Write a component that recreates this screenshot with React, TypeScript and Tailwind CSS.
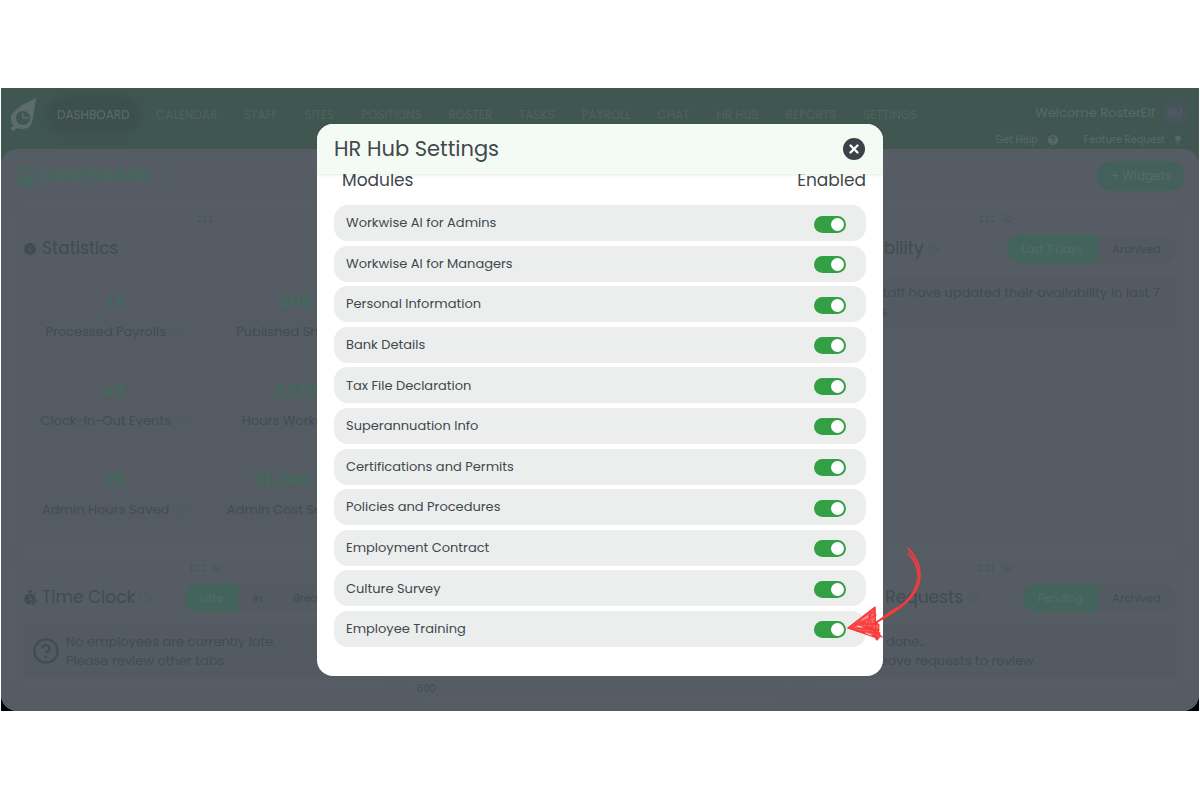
import React, { useState } from 'react';
import { CircleHelp, EyeOff, GripHorizontal, Info, Lightbulb, X } from 'lucide-react';

const NAV = ['DASHBOARD', 'CALENDAR', 'STAFF', 'SITES', 'POSITIONS', 'ROSTER', 'TASKS', 'PAYROLL', 'CHAT', 'HR HUB', 'REPORTS', 'SETTINGS'];

const MODULES = [
  'Workwise AI for Admins',
  'Workwise AI for Managers',
  'Personal Information',
  'Bank Details',
  'Tax File Declaration',
  'Superannuation Info',
  'Certifications and Permits',
  'Policies and Procedures',
  'Employment Contract',
  'Culture Survey',
  'Employee Training',
];

const STATS = [
  { value: '12', label: 'Processed Payrolls' },
  { value: '308', label: 'Published Shifts' },
  { value: '42', label: 'Clock-In-Out Events' },
  { value: '2,278', label: 'Hours Worked' },
  { value: '26', label: 'Admin Hours Saved' },
  { value: '$1,040.00', label: 'Admin Cost Saved' },
];

const Logo = () => (
  <svg viewBox="0 0 28 36" className="h-9 w-7 shrink-0" fill="#5b6c6b" aria-hidden="true">
    <path fillRule="evenodd" d="M27 2 L13 9 L8 13 L2 19 C1 23 2 27 5 30 L1 32 L4 35 L9 32 C13 34 19 33 22 29 L24 22 Z M14 15 C18 15 21 18 21 22 C21 26 18 29 14 29 C10 29 7 26 7 22 C7 18 10 15 14 15 Z" />
    <path d="M13 17 h1.5 v4 h5 v1.5 h-6.5 Z" />
  </svg>
);

const GaugeIcon = () => (
  <svg viewBox="0 0 22 22" className="size-[22px] shrink-0" fill="none" stroke="#44685c" aria-hidden="true">
    <circle cx="11" cy="11" r="9.5" strokeWidth="1.8" />
    <path d="M4 15 C8 13.5 14 13.5 18 15 C15 20.5 7 20.5 4 15 Z" fill="#44685c" />
    <path d="M11 13 L14 7 M5 11 h1.5 M7 7 l1 1 M11 5 v1.5 M17 11 h-1.5" strokeWidth="1.4" />
  </svg>
);

const StopwatchIcon = () => (
  <svg viewBox="0 0 14 16" className="h-4 w-3.5 shrink-0" aria-hidden="true">
    <path d="M4 1 h4 M6 1 v2 M10 3 l1.5 1.5" stroke="#414b50" strokeWidth="1.6" />
    <circle cx="6" cy="9" r="5.5" fill="#414b50" />
    <path d="M6 6 v3.5 h2" stroke="#555c64" strokeWidth="1.3" fill="none" />
    <path d="M7 12 l2.5 2.5 L13.5 10" stroke="#555c64" strokeWidth="3" fill="none" />
    <path d="M7.5 12 l2 2 L13 10.5" stroke="#414b50" strokeWidth="1.4" fill="none" />
  </svg>
);

const Handle = ({ hide = true }: { hide?: boolean }) => (
  <div className="flex h-6 items-center justify-center gap-1 text-[#4a5359]">
    <GripHorizontal className="size-5" strokeWidth={1} />
    {hide && <EyeOff className="size-3" strokeWidth={1.5} />}
  </div>
);

interface WidgetProps {
  title: string;
  icon: React.ReactNode;
  tabs?: string[];
  hide?: boolean;
  help?: boolean;
  className?: string;
  tabsClassName?: string;
  children: React.ReactNode;
}

const Widget = ({ title, icon, tabs = [], hide, help = true, className = '', tabsClassName = '', children }: WidgetProps) => (
  <section className={`rounded-lg border border-[#575e66] px-2 pb-2 ${className}`}>
    <Handle hide={hide} />
    <div className="mt-1 mb-3 flex h-7 items-center justify-between">
      <h2 className="flex items-center gap-1 text-[17px] whitespace-nowrap text-[#414b50]">
        {icon}
        {title}
        {help && <CircleHelp className="size-3 text-[#4c555b]" strokeWidth={1.2} />}
      </h2>
      {tabs.length > 0 && (
        <div className={`flex h-7 overflow-hidden rounded-full bg-[#535a62] text-[11px] ${tabsClassName}`}>
          {tabs.map((tab, i) => (
            <button key={tab} type="button" className={i === 0 ? 'bg-[#43645b] px-[15px] text-[#566b69]' : 'px-[15px] text-[#434c52]'}>
              {tab}
            </button>
          ))}
        </div>
      )}
    </div>
    {children}
  </section>
);

const Notice = ({ lines }: { lines: string[] }) => (
  <div className="flex items-center gap-1.5 rounded bg-[#535a62] px-2 py-2 text-[13px] leading-[19px] whitespace-nowrap text-[#434c52]">
    <CircleHelp className="size-7 shrink-0" strokeWidth={2} />
    <p>
      {lines.map((line) => (
        <span key={line} className="block">{line}</span>
      ))}
    </p>
  </div>
);

const Dashboard = () => (
  <div className="overflow-hidden rounded-b-2xl bg-[#405650]">
    <header className="flex h-[61px] items-start pr-3 pl-2">
      <div className="pt-2">
        <Logo />
      </div>
      <nav className="mr-[120px] ml-5 flex flex-1 items-center justify-between pt-[18px] text-[12px] leading-[18px] whitespace-nowrap text-[#50625f]">
        {NAV.map((item, i) => (
          <a key={item} href="#" className={i === 0 ? 'rounded-full bg-[#3d504c] text-[#5b6c6b] shadow-[0_0_10px_10px_#3d504c]' : ''}>
            {item}
          </a>
        ))}
      </nav>
      <div className="-ml-[42px] text-[#586a67]">
        <div className="flex h-[42px] items-center justify-end gap-2 pt-2 text-[13px]">
          Welcome RosterElf
          <span className="flex size-6 items-center justify-center rounded-full bg-[#46545c] text-[10px] text-[#555e68]">RM</span>
        </div>
        <div className="flex items-center justify-end gap-6 pr-1 text-[10px] leading-[20px]">
          <a href="#" className="flex items-center gap-2">Get Help <CircleHelp className="size-3.5" fill="currentColor" stroke="#405650" strokeWidth={2.5} /></a>
          <a href="#" className="flex items-center gap-2">Feature Request <Lightbulb className="size-2.5" fill="currentColor" /></a>
        </div>
      </div>
    </header>

    <main className="rounded-t-2xl bg-[#555c64] px-3.5 pt-3 pb-3">
      <div className="mb-[15px] flex h-[30px] items-center justify-between">
        <h1 className="flex items-center gap-1 text-[17px] font-bold text-[#44685c]">
          <GaugeIcon />
          DASHBOARD
          <CircleHelp className="ml-2 size-3 text-[#4f5960]" strokeWidth={1.2} />
        </h1>
        <button type="button" className="h-[30px] w-[88px] rounded-full bg-[#43615a] text-[12px] text-[#566b69]">+ Widgets</button>
      </div>
      <div className="grid grid-cols-3 gap-x-3.5">
        <div className="flex flex-col gap-1 pb-3">
          <Widget title="Statistics" hide={false} help={false} icon={<Info className="-ml-0.5 size-4" fill="#414b50" stroke="#555c64" strokeWidth={2} />}>
            <div className="grid h-[267px] grid-cols-2 rounded bg-[#545b63]">
              {STATS.map((s) => (
                <div key={s.label} className="flex flex-col items-center gap-2 pt-3.5">
                  <strong className="text-[17px] leading-[26px] text-[#44685c]">{s.value}</strong>
                  <span className="flex items-center gap-1.5 text-[13px] leading-[18px] whitespace-nowrap text-[#434c52]">
                    {s.label}
                    <CircleHelp className="size-3 text-[#4e5960]" strokeWidth={1.2} />
                  </span>
                </div>
              ))}
            </div>
          </Widget>
          <Widget title="Time Clock" tabs={['Late', 'In', 'Break']} tabsClassName="pr-12" icon={<StopwatchIcon />}>
            <Notice lines={['No employees are currently late.', 'Please review other tabs.']} />
          </Widget>
        </div>
        <div className="flex items-end rounded-lg border border-[#575e66] px-1.5 py-0.5 text-[10px] text-[#434c52]">600</div>
        <div className="flex flex-col gap-1 pb-3">
          <Widget title="Availability" className="flex-1" tabs={['Last 7 Days', 'Archived']} icon={<Info className="size-3.5" />}>
            <Notice lines={['No staff have updated their availability in last 7', 'days.']} />
          </Widget>
          <Widget title="Leave Requests" tabs={['Pending', 'Archived']} icon={<Info className="size-3.5" />}>
            <Notice lines={['Well done..', 'No leave requests to review.']} />
          </Widget>
        </div>
      </div>
    </main>
  </div>
);

const Arrow = () => (
  <svg viewBox="0 0 76 98" className="pointer-events-none absolute -right-[39px] bottom-8 h-[98px] w-[76px]" fill="none" stroke="#f93a3a" strokeLinecap="round" strokeLinejoin="round" aria-hidden="true">
    <path d="M62 2 C70 10 74 19 74 29 C74 45 62 56 49 65 C42 70 36 73 29 77" strokeWidth="1.7" />
    <path d="M62 8 C69 14 72 21 72 31 C71 44 62 56 50 63 C43 67 36 73 28 78" strokeWidth="1.5" />
    <path d="M63 6 C69 13 73 20 73 29" strokeWidth="1" />
    <path d="M52 62 C48 62 42 68 35 73" strokeWidth="1.4" />
    <path d="M2 82 L29 61 L28 74 L33 79 L32 92 L28 91 Z" fill="#f93a3a" fillOpacity="0.75" strokeWidth="1.2" />
    <path d="M2 82 L28 63 M5 82 L29 65 M10 80 L30 69 M3 82 L30 84 M2 82 L31 91 M14 78 L31 78 M11 85 L34 87 L15 80 L33 84 M25 67 L20 83 M29 62 L30 93 M23 70 L31 94 M18 75 L31 94 L34 90 L24 80 L36 91" strokeWidth="1.3" />
    <path d="M16 74 L22 70 M20 87 L25 89 M11 80 L16 81" stroke="#ffe3e3" strokeWidth="0.8" />
  </svg>
);

const SettingsDialog = () => {
  const [enabled, setEnabled] = useState<Record<string, boolean>>(() => Object.fromEntries(MODULES.map((m) => [m, true])));
  return (
    <div role="dialog" aria-labelledby="settings-title" className="relative w-[566px] max-w-full text-[#41484c]">
      <div className="overflow-hidden rounded-2xl bg-white">
        <div className="relative z-10 flex h-[50px] items-center justify-between bg-[#f4fbf5] pr-[18px] pl-[17px] shadow-[0_0_4px_rgba(0,0,0,0.15)]">
          <h2 id="settings-title" className="text-[21px]">HR Hub Settings</h2>
          <button type="button" aria-label="Close" className="flex size-[22px] items-center justify-center rounded-full bg-[#3b434a] text-white">
            <X className="size-3.5" strokeWidth={4} />
          </button>
        </div>
        {/* The column heads are scrolled a little way under the title bar */}
        <div className="-mt-[7px] px-[17px] pb-[29px]">
          <div className="flex justify-between pl-2 text-[17px] leading-[26px]">
            <span>Modules</span>
            <span>Enabled</span>
          </div>
          <ul className="mt-3 flex min-h-[442px] flex-col justify-between">
            {MODULES.map((m) => (
              <li key={m}>
                <label className="flex h-9 items-center justify-between rounded-[14px] bg-[#eceeee] pr-5 pl-3 text-[13px]">
                  {m}
                  <input
                    type="checkbox"
                    role="switch"
                    checked={enabled[m]}
                    onChange={(e) => setEnabled({ ...enabled, [m]: e.target.checked })}
                    className="mt-0.5 flex h-[17px] w-8 appearance-none items-center rounded-full bg-gray-400 px-0.5 before:size-[13px] before:rounded-full before:bg-white checked:justify-end checked:bg-[#33a045]"
                  />
                </label>
              </li>
            ))}
          </ul>
        </div>
      </div>
      <Arrow />
    </div>
  );
};

export default function App() {
  return (
    <div className="min-h-screen bg-white px-px pt-[88px] font-['Poppins','Inter',sans-serif]">
      <div className="relative bg-black">
        <Dashboard />
        <div className="absolute inset-0 flex items-start justify-center pt-9">
          <SettingsDialog />
        </div>
      </div>
    </div>
  );
}
